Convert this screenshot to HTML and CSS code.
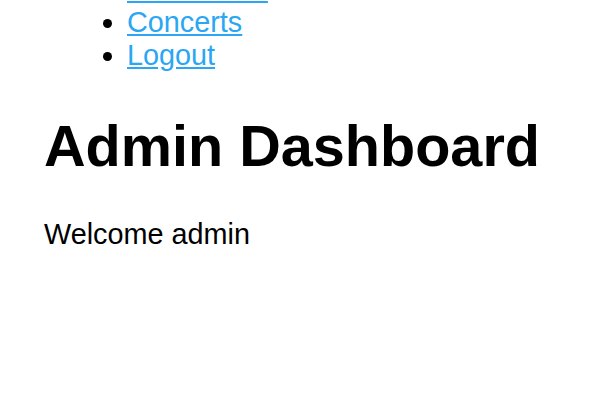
FILE: index.html
```html
<!DOCTYPE html>
<html>
<head>
<meta charset="utf-8">
<link rel="stylesheet" href="styles.css">
</head>
<body>
<div class="page">
  <nav class="nav">
    <ul class="nav-list">
      <li><a href="#">Dashboard</a></li>
      <li><a href="#">Concerts</a></li>
      <li><a href="#">Logout</a></li>
    </ul>
  </nav>
  <h1 class="title">Admin Dashboard</h1>
  <p class="welcome">Welcome admin</p>
</div>
</body>
</html>
```

FILE: styles.css
```css
html, body {
  margin: 0;
  padding: 0;
  background: #ffffff;
}
body {
  font-family: "Liberation Sans", Arial, sans-serif;
  color: #000;
  overflow: hidden;
}
.page {
  padding-left: 44px;
  margin-top: -27px;
}
.nav-list {
  margin: 0;
  padding-left: 83px;
  font-size: 28.8px;
}
.nav-list a {
  color: #2ba6f2;
  text-decoration: underline;
}
.title {
  font-size: 57.6px;
  font-weight: bold;
  margin: 41px 0 39px;
}
.welcome {
  font-size: 28.8px;
  margin: 0;
}
```
